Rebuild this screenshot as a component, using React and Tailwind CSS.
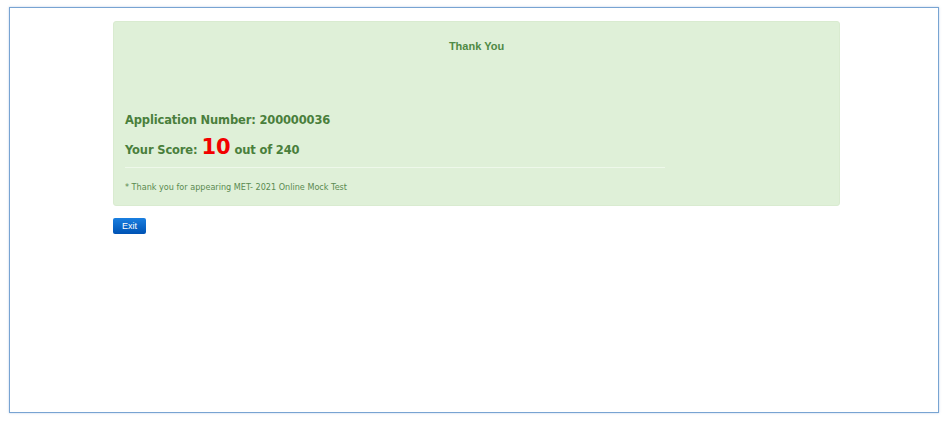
import React from 'react';

export default function App() {
  return (
    <div className="min-h-screen bg-white pt-[7px] pl-[9px]">
      <div className="w-[930px] h-[406px] border border-[#78a4d2] shadow-[0_0_2px_rgba(120,160,210,0.5)]">
        <div className="ml-[103px] mt-[13px] w-[727px] h-[185px] rounded-[3px] border border-[#d9ebd0] bg-[#dff0d8] px-[11px] font-['DejaVu_Sans',sans-serif] text-[#4a7f3c]">
          <div className="pt-[17px] text-center font-['Liberation_Sans',Arial,sans-serif] text-[11px] font-bold leading-[14px] text-[#4f8a45]">
            Thank You
          </div>
          <div className="mt-[59px] text-[11.5px] font-bold leading-[16px] tracking-[-0.15px]">
            Application Number: 200000036
          </div>
          <div className="mt-[8px] flex items-baseline gap-[4px] text-[11.5px] font-bold leading-[22px] tracking-[-0.15px]">
            <span>Your Score:</span>
            <span className="text-[21px] text-[#f20000]">10</span>
            <span>out of 240</span>
          </div>
          <div className="mt-[6px] h-px w-[540px] bg-[#eef8ea]" />
          <div className="mt-[13px] text-[8.1px] leading-[12px] text-[#5a8a50]">
            * Thank you for appearing MET- 2021 Online Mock Test
          </div>
        </div>
        <button className="ml-[103px] mt-[12px] h-[16px] w-[33px] rounded-[2px] bg-gradient-to-b from-[#1a7fe0] to-[#0052b4] font-['Liberation_Sans',Arial,sans-serif] text-[9px] leading-[16px] text-white">
          Exit
        </button>
      </div>
    </div>
  );
}
